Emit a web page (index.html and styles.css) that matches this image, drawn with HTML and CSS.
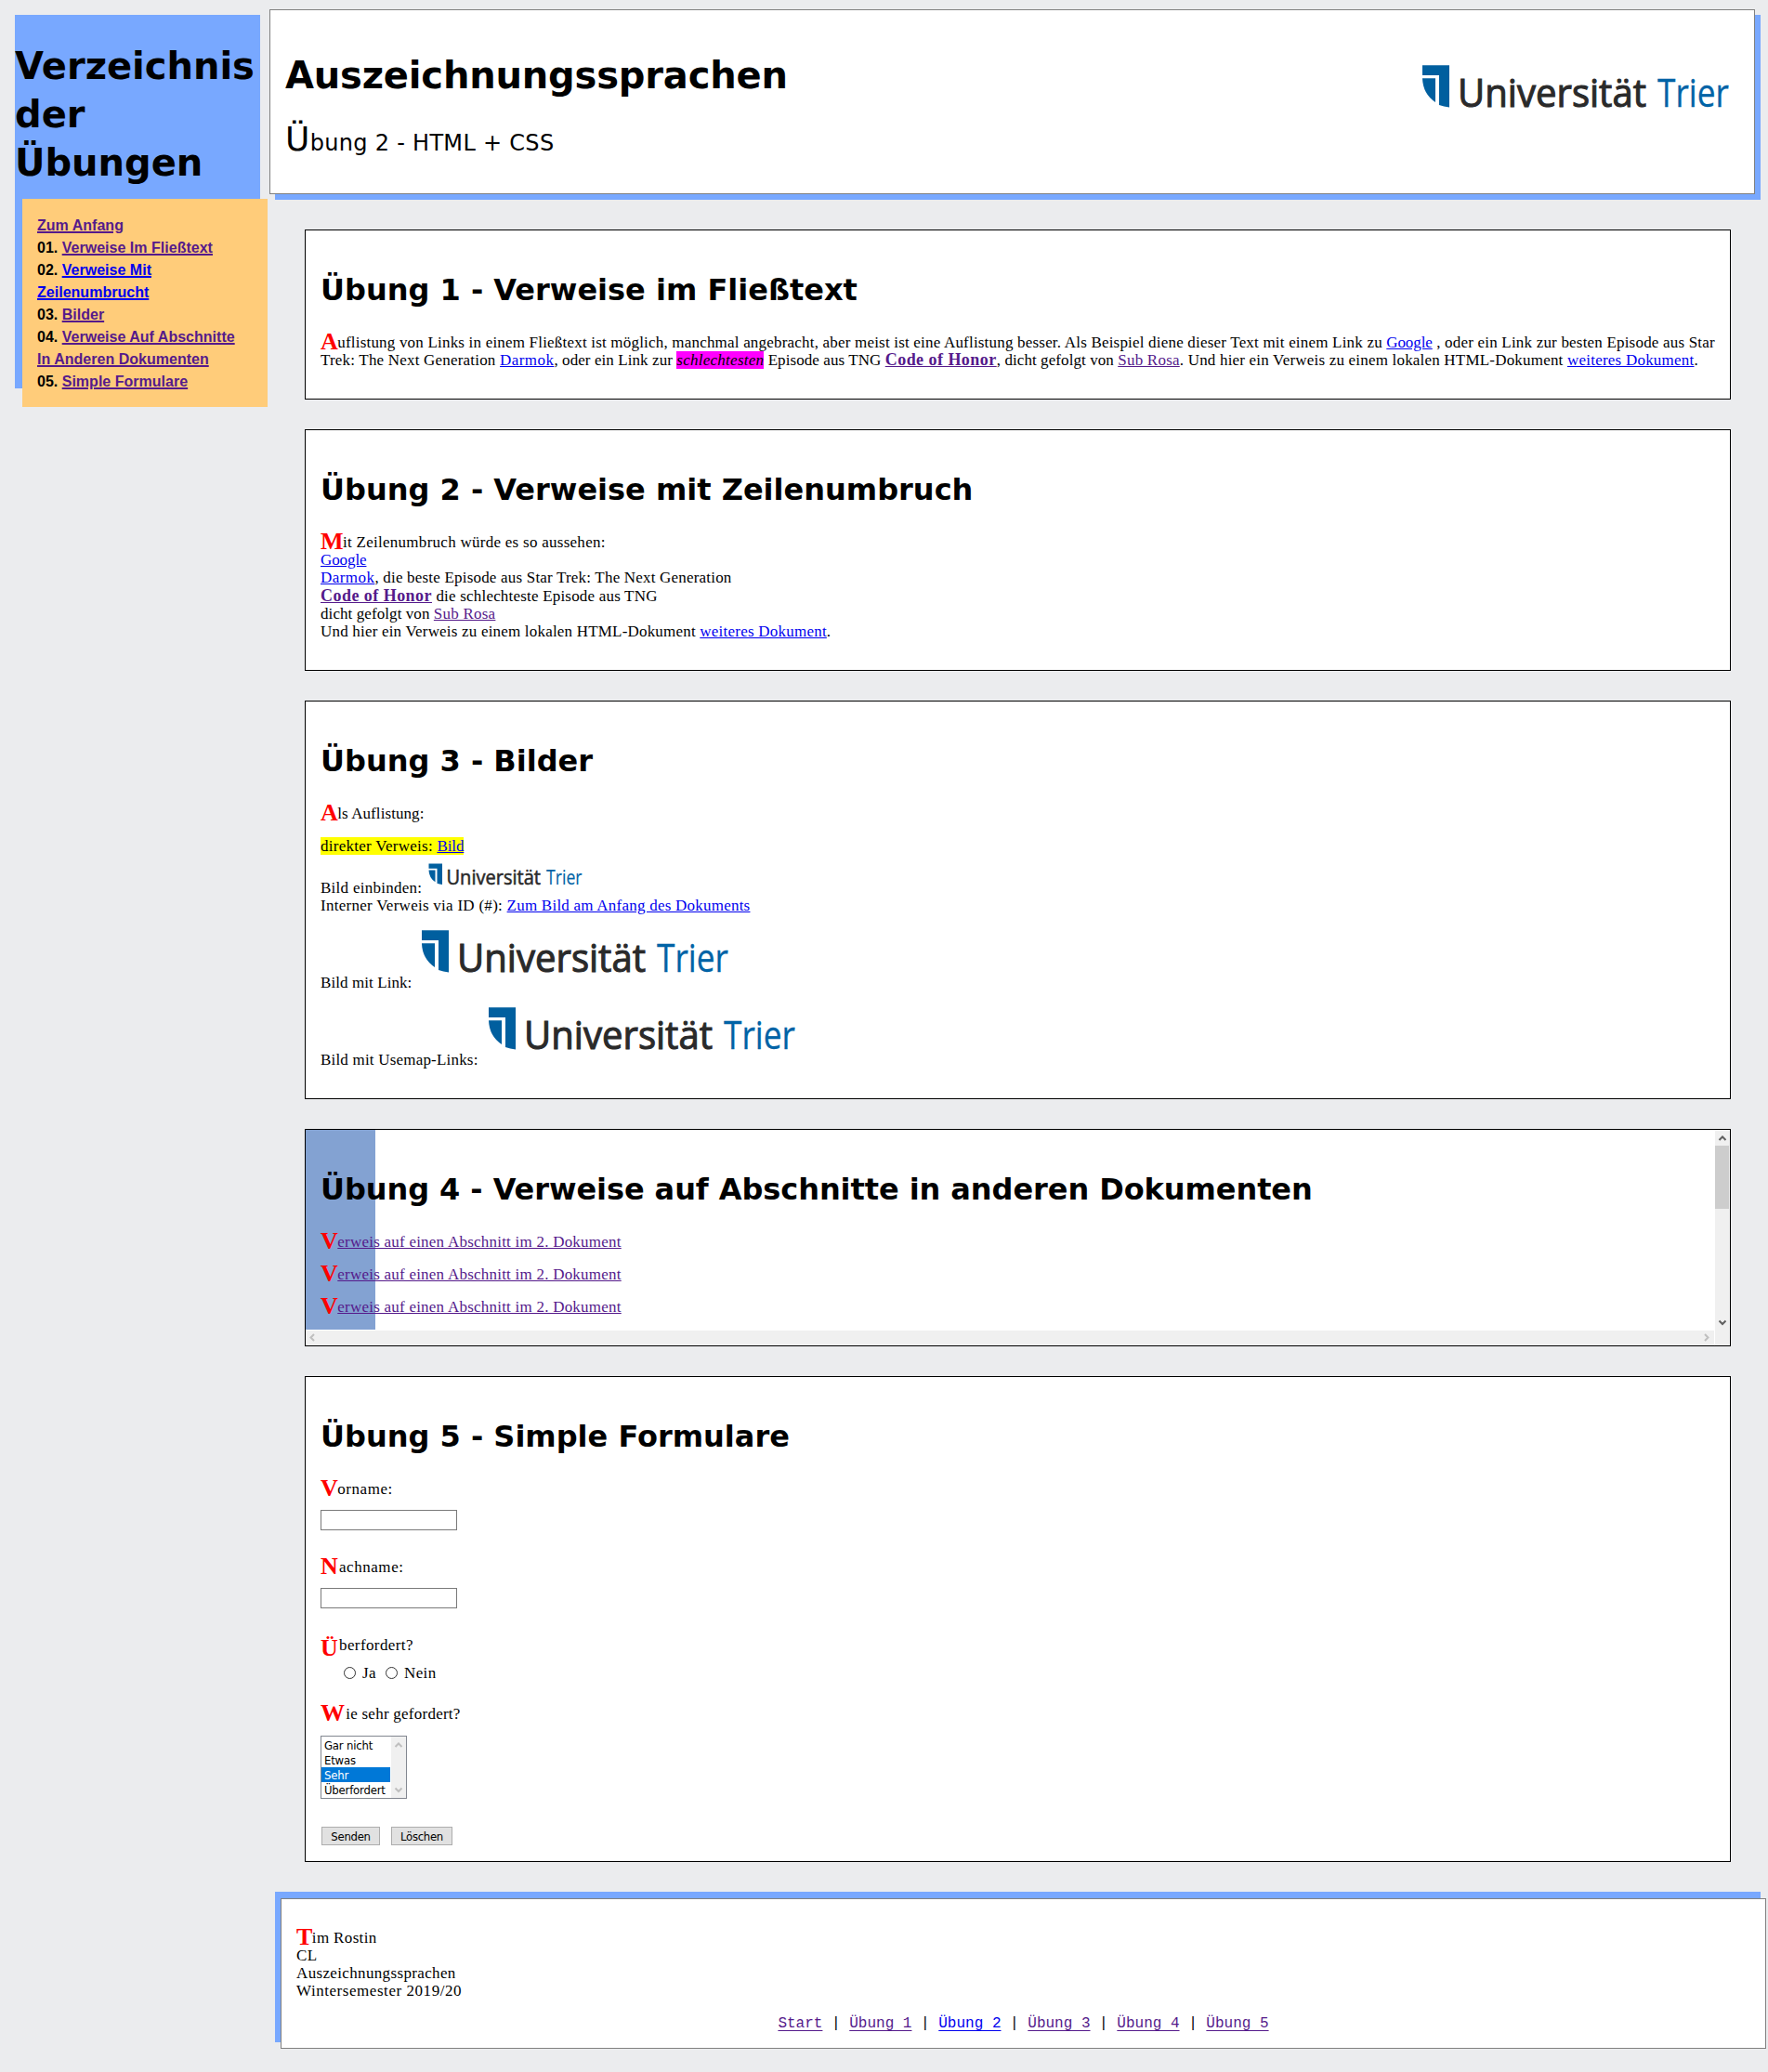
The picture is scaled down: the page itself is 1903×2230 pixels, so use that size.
FILE: index.html
```html
<!DOCTYPE html>
<html lang="de">
<head>
<meta charset="utf-8">
<title>Auszeichnungssprachen</title>
<link rel="stylesheet" href="styles.css">
</head>
<body>
<div class="page">
  <aside class="sidebar">
    <h1 class="sidebar-title">Verzeichnis<br>der<br>Übungen</h1>
    <nav class="menu">
      <a class="visited" href="#start">Zum Anfang</a><br>
      01. <a class="visited" href="#u1">Verweise Im Fließtext</a><br>
      02. <a href="#u2">Verweise Mit<br>Zeilenumbrucht</a><br>
      03. <a class="visited" href="#u3">Bilder</a><br>
      04. <a class="visited" href="#u4">Verweise Auf Abschnitte<br>In Anderen Dokumenten</a><br>
      05. <a class="visited" href="#u5">Simple Formulare</a>
    </nav>
  </aside>
  <main class="main">
    <header class="backdrop backdrop-top" id="start">
      <div class="panel panel-top">
        <div>
          <h1 class="title">Auszeichnungssprachen</h1>
          <p class="subtitle"><span class="subtitle-initial">Ü</span>bung 2 - HTML + CSS</p>
        </div>
        <svg class="logo" viewBox="0 0 348 79">
          <path d="M7 17.300H36V62.600Q30 61.800 25 60V28H7Z"/>
          <path d="M7 31.300H21V57Q7.500 48 7 31.300Z"/>
          <text class="logo-uni" x="45" y="62" textLength="203" lengthAdjust="spacingAndGlyphs">Universität</text>
          <text class="logo-trier" x="260" y="62" textLength="77" lengthAdjust="spacingAndGlyphs">Trier</text>
        </svg>
      </div>
    </header>

    <section class="box" id="u1">
      <h1>Übung 1 - Verweise im Fließtext</h1>
      <p><span class="initial">A</span>uflistung von Links in einem Fließtext ist möglich, manchmal angebracht, aber meist ist eine Auflistung besser. Als Beispiel diene dieser Text mit einem Link zu <a class="tight" href="#">Google</a> , oder ein Link zur besten Episode aus Star<br>Trek: The Next Generation <a class="wide" href="#">Darmok</a><span class="snug">, oder ein Link zur </span><em class="worst">schlechtesten</em><span class="snug"> Episode aus TNG </span><a class="visited strong" href="#">Code of Honor</a><span class="snug">, dicht gefolgt von </span><a class="visited" href="#">Sub Rosa</a>. Und hier ein Verweis zu einem lokalen HTML-Dokument <a href="#">weiteres Dokument</a>.</p>
    </section>

    <section class="box box-breaks" id="u2">
      <h1>Übung 2 - Verweise mit Zeilenumbruch</h1>
      <p><span class="initial">M</span><span class="loose">it Zeilenumbruch würde es so aussehen:</span><br><a class="tight" href="#">Google</a><br><a class="wide" href="#">Darmok</a>, die beste Episode aus Star Trek: The Next Generation<br><a class="visited strong" href="#">Code of Honor</a> die schlechteste Episode aus TNG<br><span class="snug">dicht gefolgt von </span><a class="visited" href="#">Sub Rosa</a><br>Und hier ein Verweis zu einem lokalen HTML-Dokument <a href="#">weiteres Dokument</a>.</p>
    </section>

    <section class="box" id="u3">
      <h1>Übung 3 - Bilder</h1>
      <p><span class="initial">A</span><span class="snug">ls Auflistung:</span></p>
      <div class="pictures">
        <div><span class="marked loose">direkter Verweis: <a class="tight" href="#">Bild</a></span></div>
        <div class="row-small"><span class="loose">Bild einbinden:</span>
          <svg class="logo-small" viewBox="0 0 348 79">
            <path d="M7 17.300H36V62.600Q30 61.800 25 60V28H7Z"/>
            <path d="M7 31.300H21V57Q7.500 48 7 31.300Z"/>
            <text class="logo-uni" x="45" y="62" textLength="203" lengthAdjust="spacingAndGlyphs">Universität</text>
            <text class="logo-trier" x="260" y="62" textLength="77" lengthAdjust="spacingAndGlyphs">Trier</text>
          </svg>
        </div>
        <div><span class="loose">Interner Verweis via ID (#): </span><a href="#start">Zum Bild am Anfang des Dokuments</a></div>
        <div class="row-large"><span class="snug">Bild mit Link:</span>
          <svg class="logo" viewBox="0 0 348 79">
            <path d="M7 17.300H36V62.600Q30 61.800 25 60V28H7Z"/>
            <path d="M7 31.300H21V57Q7.500 48 7 31.300Z"/>
            <text class="logo-uni" x="45" y="62" textLength="203" lengthAdjust="spacingAndGlyphs">Universität</text>
            <text class="logo-trier" x="260" y="62" textLength="77" lengthAdjust="spacingAndGlyphs">Trier</text>
          </svg>
        </div>
        <div class="row-large">Bild mit Usemap-Links:
          <svg class="logo" viewBox="0 0 348 79">
            <path d="M7 17.300H36V62.600Q30 61.800 25 60V28H7Z"/>
            <path d="M7 31.300H21V57Q7.500 48 7 31.300Z"/>
            <text class="logo-uni" x="45" y="62" textLength="203" lengthAdjust="spacingAndGlyphs">Universität</text>
            <text class="logo-trier" x="260" y="62" textLength="77" lengthAdjust="spacingAndGlyphs">Trier</text>
          </svg>
        </div>
      </div>
    </section>

    <section class="box box-scroll" id="u4">
      <div class="scroll-view">
        <h1>Übung 4 - Verweise auf Abschnitte in anderen Dokumenten</h1>
        <p><span class="initial">V</span><a class="visited" href="#">erweis auf einen Abschnitt im 2. Dokument</a></p>
        <p><span class="initial">V</span><a class="visited" href="#">erweis auf einen Abschnitt im 2. Dokument</a></p>
        <p><span class="initial">V</span><a class="visited" href="#">erweis auf einen Abschnitt im 2. Dokument</a></p>
      </div>
      <div class="vbar">
        <svg class="arrow" viewBox="0 0 16 16"><path d="M4.500 11L8 7.500L11.500 11"/></svg>
        <div class="thumb"></div>
        <svg class="arrow arrow-end" viewBox="0 0 16 16"><path d="M4.500 5.500L8 9L11.500 5.500"/></svg>
      </div>
      <div class="hbar">
        <svg class="arrow off" viewBox="0 0 16 16"><path d="M9 4L5.500 7.500L9 11"/></svg>
        <svg class="arrow off" viewBox="0 0 16 16"><path d="M6 4L9.500 7.500L6 11"/></svg>
      </div>
      <div class="corner"></div>
    </section>

    <section class="box box-form" id="u5">
      <h1>Übung 5 - Simple Formulare</h1>
      <form>
        <p><span class="initial">V</span>orname:</p>
        <input class="field" type="text">
        <p><span class="initial spaced">N</span>achname:</p>
        <input class="field" type="text">
        <p class="question"><span class="initial umlaut spaced">Ü</span>berfordert?</p>
        <div class="choices"><span class="radio"></span><span class="ja">Ja</span><span class="radio"></span><span>Nein</span></div>
        <p class="level"><span class="initial spaced">W</span>ie sehr gefordert?</p>
        <div class="list">
          <ul>
            <li>Gar nicht</li>
            <li>Etwas</li>
            <li class="selected">Sehr</li>
            <li>Überfordert</li>
          </ul>
          <div class="list-bar">
            <svg class="arrow off" viewBox="0 0 16 16"><path d="M4.500 11L8 7.500L11.500 11"/></svg>
            <svg class="arrow off" viewBox="0 0 16 16"><path d="M4.500 5.500L8 9L11.500 5.500"/></svg>
          </div>
        </div>
        <div class="buttons"><button type="button" class="send">Senden</button><button type="button" class="reset">Löschen</button></div>
      </form>
    </section>

    <footer class="backdrop backdrop-bottom">
      <div class="panel panel-bottom">
        <p><span class="initial">T</span>im Rostin<br>CL<br>Auszeichnungssprachen<br><span class="term">Wintersemester 2019/20</span></p>
        <nav class="footer-nav"><a class="visited" href="#start">Start</a> | <a class="visited" href="#u1">Übung 1</a> | <a href="#u2">Übung 2</a> | <a class="visited" href="#u3">Übung 3</a> | <a class="visited" href="#u4">Übung 4</a> | <a class="visited" href="#u5">Übung 5</a></nav>
      </div>
    </footer>
  </main>
</div>
</body>
</html>
```
FILE: styles.css
```css
* { box-sizing: border-box; }
body {
  margin: 0;
  background: #ebecee;
  color: #000;
  font: 17px/19px "Liberation Serif", serif;
  letter-spacing: 0.195px;
}
h1, p, ul { margin: 0; }
h1 { font-family: "DejaVu Sans", sans-serif; font-weight: bold; letter-spacing: 0; white-space: nowrap; }
a { color: #00e; text-decoration: underline; letter-spacing: 0.23px; }
a.visited { color: #551a8b; }
a.strong { font-weight: bold; font-size: 18px; line-height: 0; letter-spacing: 0.46px; }
a.tight { letter-spacing: -0.1px; }
a.wide { letter-spacing: 0.45px; }
.snug { letter-spacing: 0.08px; white-space: pre; }
.loose { letter-spacing: 0.27px; }
.page { display: flex; min-height: 2230px; }

/* Sidebar */
.sidebar { width: 264px; height: 402px; margin: 16px 16px 0; padding-top: 29px; background: #78a8ff; flex: none; }
.sidebar-title { font-size: 40px; line-height: 52px; margin-bottom: 13px; }
.menu {
  width: 264px;
  height: 224px;
  margin-left: 8px;
  padding: 17px 16px 15px;
  background: #ffcc7a;
  font: bold 16px/24px "Liberation Sans", sans-serif;
  letter-spacing: 0;
  white-space: nowrap;
}
.menu a { text-decoration-thickness: 2px; letter-spacing: 0.02px; }

/* Header and footer panels */
.main { width: 1599px; padding-top: 16px; }
.backdrop { background: #78a8ff; }
.backdrop-top { height: 199px; }
.backdrop-bottom { height: 162px; }
.panel { position: relative; height: 100%; padding: 16px; background: #fff; border: 1px solid #808080; }
.panel-top { left: -6px; top: -6px; display: flex; justify-content: space-between; }
.panel-bottom { left: 6px; top: 7px; }
.title { font-size: 40px; line-height: 52px; margin-top: 28px; letter-spacing: -0.17px; }
.subtitle { margin-top: 21px; font: 24px/52px "DejaVu Sans", sans-serif; letter-spacing: 0.3px; }
.subtitle-initial { font-size: 36px; line-height: 0; }
.logo { width: 348px; height: 79px; overflow: visible; }
.panel-top .logo { margin-top: 26px; }
.logo-small { width: 174px; height: 41px; overflow: visible; }
.logo path, .logo-small path { fill: #005f9f; }
.logo-uni, .logo-trier { font: 42px "Open Sans", sans-serif; letter-spacing: 0; }
.logo-uni { fill: #2a2a2a; stroke: #2a2a2a; stroke-width: 1.1px; }
.logo-trier { fill: #0063a6; stroke: #0063a6; stroke-width: 0.3px; }

/* Exercise boxes */
.box { margin: 32px 32px; padding: 16px; background: #fff; border: 1px solid #000; }
.box h1 { font-size: 32px; line-height: 39px; margin: 29px 0 27px; }
.box p { margin-bottom: 16px; white-space: nowrap; }
.initial { color: #f00; font-size: 26px; font-weight: bold; line-height: 0; letter-spacing: -0.5px; position: relative; top: 2px; }
.initial.umlaut { top: 6px; }
.initial.spaced { letter-spacing: 1.2px; }
.worst { background: #f0f; letter-spacing: 0.26px; }
.marked { background: #ff0; }
.box-breaks { height: 260px; }
.box-breaks p { line-height: 19.2px; }
.pictures { margin-bottom: 16px; }
.row-small, .row-large { display: flex; align-items: flex-end; gap: 4px; }
.row-small { height: 45px; }
.row-large { height: 83px; }
.row-small svg, .row-large svg { margin-bottom: 4px; }

/* Scrolling box */
.box-scroll { display: grid; grid-template: 216px 16px / 1517px 16px; height: 234px; padding: 0; }
.scroll-view { padding: 16px; background: linear-gradient(#83a2d2, #83a2d2) no-repeat 0 0 / 75px 215px; overflow: hidden; }
.scroll-view h1 { letter-spacing: -0.07px; }
.vbar { display: flex; flex-direction: column; background: #f0f0f0; }
.thumb { width: 15px; height: 68px; margin-top: 1px; background: #cdcdcd; }
.arrow { width: 16px; height: 16px; fill: none; stroke: #606060; stroke-width: 2; flex: none; }
.arrow.off { stroke: #bfbfbf; }
.arrow-end { margin-top: auto; }
.hbar { display: flex; justify-content: space-between; background: #f0f0f0; margin-right: 1px; }
.corner { background: #f0f0f0; }

/* Form */
.box-form { height: 523px; }
.box-form p { margin-bottom: 13px; letter-spacing: 0.55px; }
.field { display: block; width: 147px; height: 22px; margin: 0 0 30px; padding: 1px; border: 1px solid #7a7a7a; background: #fff; }
.box-form .question { margin-bottom: 11px; letter-spacing: 0.4px; }
.box-form .level { letter-spacing: 0.25px; }
.choices { display: flex; align-items: center; height: 19px; margin: 0 0 25px 25px; letter-spacing: 0.4px; }
.radio { width: 13px; height: 13px; border: 1px solid #333; border-radius: 50%; margin-right: 7px; }
.ja { width: 25px; }
.list { display: flex; width: 93px; height: 68px; margin-top: 14px; border: 1px solid #828790; }
.list ul { width: 74px; margin-right: 1px; padding: 1px 0 0; list-style: none; letter-spacing: -0.2px; }
.list ul, button { font: 13px/16px "DejaVu Sans Condensed", "DejaVu Sans", sans-serif; font-stretch: condensed; }
.list li { height: 16px; padding: 1px 0 0 3px; line-height: 15px; }
.selected { background: #0078d7; color: #fff; }
.list-bar { display: flex; flex-direction: column; justify-content: space-between; width: 16px; background: #f0f0f0; }
.buttons { display: flex; gap: 12px; margin: 30px 0 0 1px; }
button { height: 20px; padding: 1px 0 0; border: 1px solid #adadad; background: #e1e1e1; color: #000; letter-spacing: -0.3px; }
.send { width: 63px; }
.reset { width: 66px; }

/* Footer */
.panel-bottom p { margin-top: 16px; letter-spacing: 0.35px; }
.term { letter-spacing: 0.55px; }
.footer-nav { margin-top: 17px; text-align: center; font: 16px/19px "Liberation Mono", monospace; letter-spacing: 0; }
.footer-nav a { letter-spacing: 0; text-underline-offset: 3px; }
```
